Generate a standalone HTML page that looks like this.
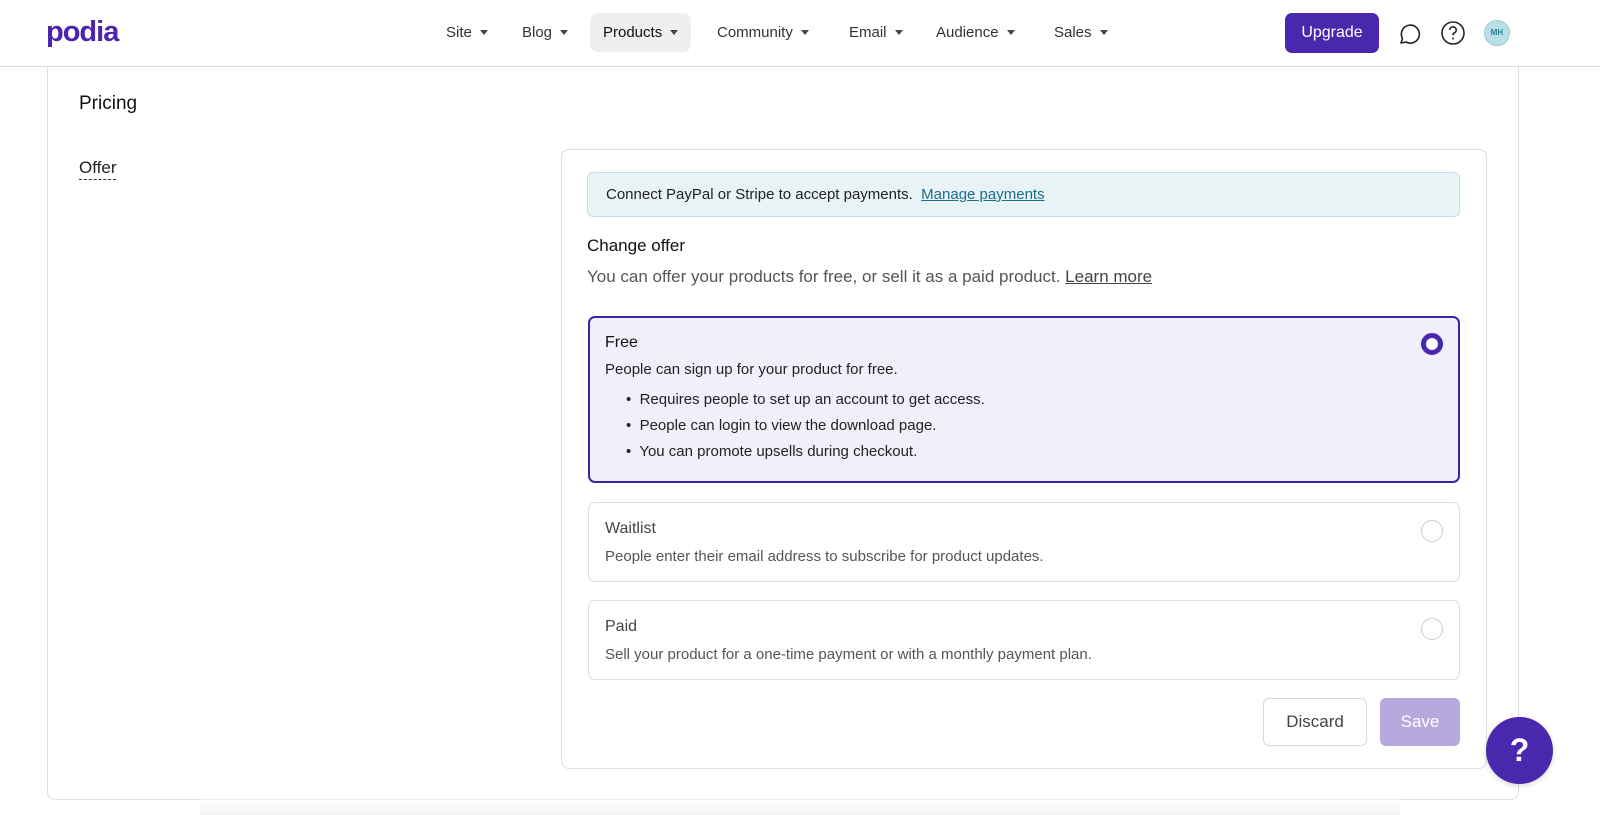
<!DOCTYPE html>
<html><head><style>
*{box-sizing:border-box;margin:0;padding:0}
body{width:1600px;height:815px;overflow:hidden;background:#fff;font-family:"Liberation Sans",sans-serif;color:#222;position:relative}
.hdr{position:absolute;left:0;top:0;width:1600px;height:67px;border-bottom:1px solid #dcdcdc;background:#fff;z-index:2}
.logo{position:absolute;left:46px;top:16px;font-size:29px;font-weight:bold;color:#4b24b0;letter-spacing:-1px}
.nav{position:absolute;top:13px;height:39px;display:flex;align-items:center;font-size:15px;color:#333;padding:0 13px;border-radius:8px}
.nav:after{content:"";margin-left:8px;border-left:4px solid transparent;border-right:4px solid transparent;border-top:5px solid #444}
.up{position:absolute;left:1285px;top:13px;width:94px;height:40px;background:#4a28ae;border-radius:7px;color:#fff;font-size:16px;text-align:center;line-height:40px}
.card{position:absolute;left:47px;top:50px;width:1472px;height:750px;border:1px solid #ddd;border-radius:8px}
.panel{position:absolute;left:561px;top:149px;width:926px;height:620px;border:1px solid #ddd;border-radius:8px}
.opt{position:absolute;left:588px;width:872px;border:1px solid #ddd;border-radius:7px;padding:0 16px}
.radio{position:absolute;right:16px;width:22px;height:22px;border-radius:50%;border:1px solid #ccc}
</style></head><body>
<div class="hdr">
<div class="logo">podia</div>
<div class="nav" style="left:433px">Site</div>
<div class="nav" style="left:509px">Blog</div>
<div class="nav" style="left:590px;background:#efeff1;color:#111">Products</div>
<div class="nav" style="left:704px">Community</div>
<div class="nav" style="left:836px">Email</div>
<div class="nav" style="left:923px">Audience</div>
<div class="nav" style="left:1041px">Sales</div>
<div class="up">Upgrade</div>
<svg style="position:absolute;left:1396px;top:21px" width="26" height="26" viewBox="0 0 26 26"><path d="M5 22l1.5-4.5A9 9 0 1 1 10 21z" fill="none" stroke="#222" stroke-width="1.6" stroke-linejoin="round"/></svg>
<svg style="position:absolute;left:1440px;top:20px" width="26" height="26" viewBox="0 0 26 26"><circle cx="13" cy="13" r="11" fill="none" stroke="#222" stroke-width="1.6"/><path d="M9.8 10a3.2 3.2 0 1 1 4.4 3c-1 .5-1.2 1.1-1.2 2.2" fill="none" stroke="#222" stroke-width="1.6"/><circle cx="13" cy="18.5" r="1" fill="#222"/></svg>
<div style="position:absolute;left:1484px;top:20px;width:26px;height:26px;border-radius:50%;background:#b9dfe8;border:1px solid #9cc;color:#2a7d98;font-size:8px;font-weight:bold;text-align:center;line-height:24px">MH</div>
</div>
<div class="card"></div>
<div style="position:absolute;left:79px;top:93px;font-size:19px;color:#111">Pricing</div>
<div style="position:absolute;left:79px;top:157px;font-size:17px;color:#222;border-bottom:1px dashed #333;line-height:22px">Offer</div>
<div class="panel"></div>
<div style="position:absolute;left:587px;top:172px;width:873px;height:45px;background:#e8f3f6;border:1px solid #c4dfe7;border-radius:6px;padding-left:18px;line-height:43px;font-size:15px;color:#222">Connect PayPal or Stripe to accept payments.&nbsp; <span style="color:#1f6e8c;text-decoration:underline">Manage payments</span></div>
<div style="position:absolute;left:587px;top:236px;font-size:17px;color:#111">Change offer</div>
<div style="position:absolute;left:587px;top:267px;font-size:17px;color:#555">You can offer your products for free, or sell it as a paid product. <span style="text-decoration:underline;color:#444">Learn more</span></div>
<div class="opt" style="top:316px;height:167px;border:2px solid #3f22a6;background:#f1effa;padding:0 15px">
<div style="margin-top:16px;font-size:16px;color:#111">Free</div>
<div style="margin-top:9px;font-size:15px;color:#222">People can sign up for your product for free.</div>
<ul style="margin-top:9px;margin-left:21px;font-size:15px;color:#222;line-height:26px;list-style:none">
<li>•&nbsp; Requires people to set up an account to get access.</li>
<li>•&nbsp; People can login to view the download page.</li>
<li>•&nbsp; You can promote upsells during checkout.</li></ul>
<div class="radio" style="top:15px;right:15px;border:5px solid #4a28ae;background:#fff"></div>
</div>
<div class="opt" style="top:502px;height:80px">
<div style="margin-top:17px;font-size:16px;color:#444">Waitlist</div>
<div style="margin-top:10px;font-size:15px;color:#555">People enter their email address to subscribe for product updates.</div>
<div class="radio" style="top:17px"></div></div>
<div class="opt" style="top:600px;height:80px">
<div style="margin-top:17px;font-size:16px;color:#444">Paid</div>
<div style="margin-top:10px;font-size:15px;color:#555">Sell your product for a one-time payment or with a monthly payment plan.</div>
<div class="radio" style="top:17px"></div></div>
<div style="position:absolute;left:1263px;top:698px;width:104px;height:48px;border:1px solid #d8d8d8;border-radius:6px;text-align:center;line-height:46px;font-size:17px;color:#444">Discard</div>
<div style="position:absolute;left:1380px;top:698px;width:80px;height:48px;background:#b7a9de;border-radius:6px;text-align:center;line-height:48px;font-size:17px;color:#fff">Save</div>
<div style="position:absolute;left:200px;top:795px;width:1200px;height:20px;background:linear-gradient(#fff,#eee);opacity:.6"></div>
<div style="position:absolute;left:1486px;top:717px;width:67px;height:67px;border-radius:50%;background:#4a28ae;color:#fff;font-size:32px;font-weight:bold;text-align:center;line-height:67px;box-shadow:0 2px 6px rgba(0,0,0,.15)">?</div>
</body></html>
